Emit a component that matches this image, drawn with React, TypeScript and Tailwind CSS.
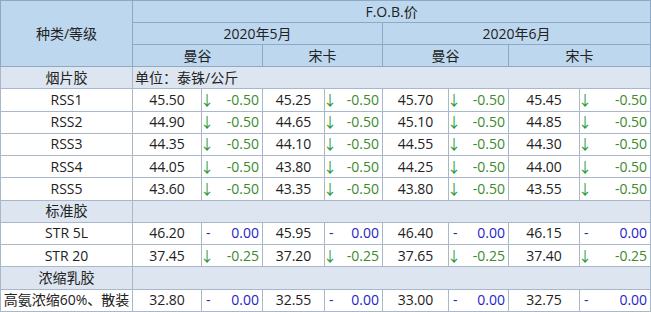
const rows = [
  { group: '烟片胶', note: '单位：泰铢/公斤' },
  { name: 'RSS1', v: ['45.50', '-0.50', '45.25', '-0.50', '45.70', '-0.50', '45.45', '-0.50'] },
  { name: 'RSS2', v: ['44.90', '-0.50', '44.65', '-0.50', '45.10', '-0.50', '44.85', '-0.50'] },
  { name: 'RSS3', v: ['44.35', '-0.50', '44.10', '-0.50', '44.55', '-0.50', '44.30', '-0.50'] },
  { name: 'RSS4', v: ['44.05', '-0.50', '43.80', '-0.50', '44.25', '-0.50', '44.00', '-0.50'] },
  { name: 'RSS5', v: ['43.60', '-0.50', '43.35', '-0.50', '43.80', '-0.50', '43.55', '-0.50'] },
  { group: '标准胶' },
  { name: 'STR 5L', v: ['46.20', '0.00', '45.95', '0.00', '46.40', '0.00', '46.15', '0.00'] },
  { name: 'STR 20', v: ['37.45', '-0.25', '37.20', '-0.25', '37.65', '-0.25', '37.40', '-0.25'] },
  { group: '浓缩乳胶' },
  { name: '高氨浓缩60%、散装', v: ['32.80', '0.00', '32.55', '0.00', '33.00', '0.00', '32.75', '0.00'] },
];

const hd = 'border border-[#8fa9c4] bg-[#bdd7ee] text-center font-normal';
const cell = 'border border-[#a9b8c9]';

function Change({ value }: { value: string }) {
  const down = value.startsWith('-');
  return (
    <td className={`${cell} pl-0.5 pr-[3px]`}>
      <div className="flex items-center justify-between">
        {down
          ? <span className="text-[#1f9a3a] -ml-[4px]">↓</span>
          : <span className="text-[#1f2fa8] pl-0.5">-</span>}
        <span className={down ? 'text-[#3b8a2e]' : 'text-[#2424c8]'}>{value}</span>
      </div>
    </td>
  );
}

export default function App() {
  return (
    <div className="w-[651px] h-[312px] bg-white overflow-hidden">
      <table
        className="w-[650px] h-[312px] table-fixed border-collapse text-[14px] leading-none text-[#222]"
        style={{ fontFamily: '"Open Sans", "Noto Sans CJK SC", sans-serif' }}
      >
        <colgroup>
          <col className="w-[132px]" />
          <col className="w-[69px]" />
          <col className="w-[61px]" />
          <col className="w-[62px]" />
          <col className="w-[58px]" />
          <col className="w-[66px]" />
          <col className="w-[60px]" />
          <col className="w-[71px]" />
          <col className="w-[71px]" />
        </colgroup>
        <thead>
          <tr className="h-[22px]">
            <th rowSpan={3} className={hd}>种类/等级</th>
            <th colSpan={8} className={hd}>F.O.B.价</th>
          </tr>
          <tr className="h-[22px]">
            <th colSpan={4} className={hd}>2020年5月</th>
            <th colSpan={4} className={hd}>2020年6月</th>
          </tr>
          <tr className="h-[22px]">
            <th colSpan={2} className={hd}>曼谷</th>
            <th colSpan={2} className={hd}>宋卡</th>
            <th colSpan={2} className={hd}>曼谷</th>
            <th colSpan={2} className={hd}>宋卡</th>
          </tr>
        </thead>
        <tbody>
          {rows.map((r, i) =>
            r.group ? (
              <tr key={i} className="h-[22px] bg-[#dde6f0]">
                <td className={`${cell} text-center`}>{r.group}</td>
                <td colSpan={8} className={`${cell} px-0.5`}>{r.note ?? ''}</td>
              </tr>
            ) : (
              <tr key={i} className="h-[22px]">
                <td className={`${cell} text-center whitespace-nowrap`}>{r.name}</td>
                {r.v!.map((x, j) =>
                  j % 2 === 0
                    ? <td key={j} className={`${cell} text-center`}>{x}</td>
                    : <Change key={j} value={x} />
                )}
              </tr>
            )
          )}
        </tbody>
      </table>
    </div>
  );
}
